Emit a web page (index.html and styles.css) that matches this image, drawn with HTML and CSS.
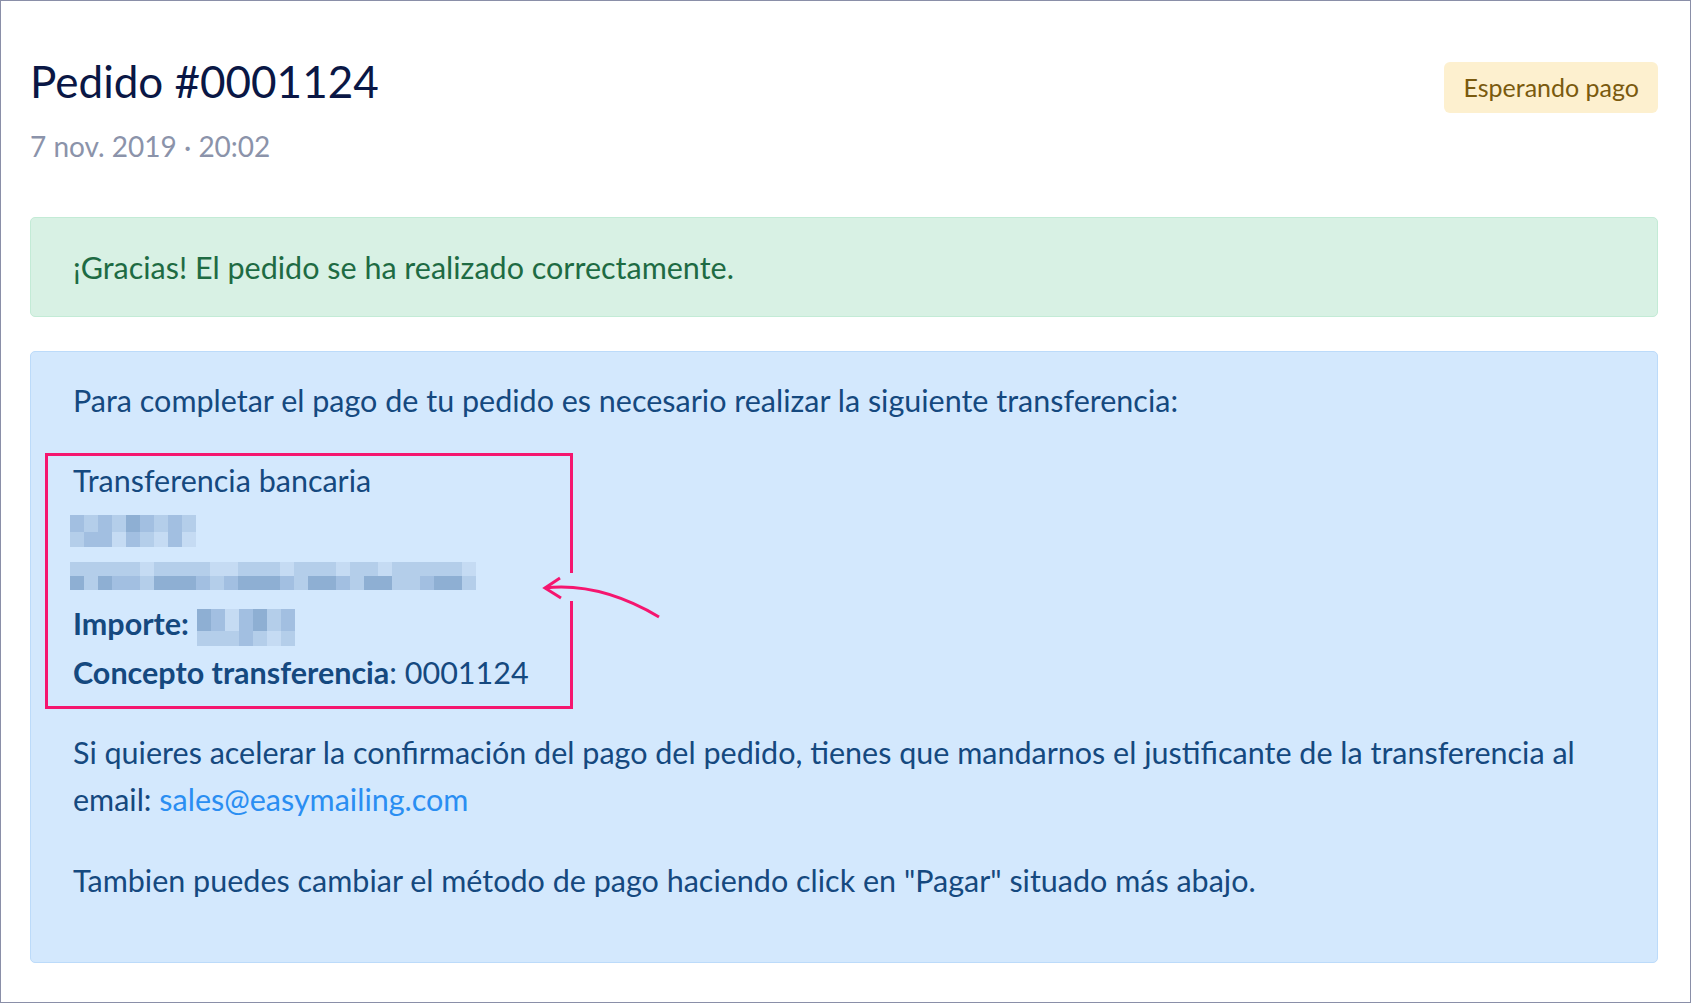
FILE: index.html
```html
<!DOCTYPE html>
<html>

<head>
    <link rel="stylesheet" href="styles.css">
</head>

<body>

    <div class="page">
        <div class="header">
            <div>
                <h1 class="title">Pedido #0001124</h1>
                <div class="date">7 nov. 2019 · 20:02</div>
            </div>
            <span class="badge">Esperando pago</span>
        </div>

        <div class="alert alert-success">¡Gracias! El pedido se ha realizado correctamente.</div>

        <div class="alert alert-info">
            <p>Para completar el pago de tu pedido es necesario realizar la siguiente transferencia:</p>

            <div class="bank">
                <div>Transferencia bancaria</div>
                <div class="mosaic-line">
                    <div class="mosaic mosaic-name">
                        <span class="m2"></span><span class="m3"></span><span class="m2"></span><span class="m3"></span><span class="m1"></span><span class="m2"></span><span class="m3"></span><span class="m2"></span><span class="m3"></span>
                        <span class="m3"></span><span class="m2"></span><span class="m2"></span><span class="m4"></span><span class="m2"></span><span class="m3"></span><span class="m4"></span><span class="m2"></span><span class="m4"></span>
                    </div>
                </div>
                <div class="mosaic-line">
                    <div class="mosaic mosaic-iban">
                        <span class="m3"></span><span class="m3"></span><span class="m3"></span><span class="m3"></span><span class="m3"></span><span class="m4"></span><span class="m3"></span><span class="m3"></span><span class="m3"></span><span class="m3"></span><span class="m4"></span><span class="m4"></span><span class="m3"></span><span class="m3"></span><span class="m3"></span><span class="m4"></span><span class="m3"></span><span class="m3"></span><span class="m3"></span><span class="m4"></span><span class="m3"></span><span class="m3"></span><span class="m4"></span><span class="m3"></span><span class="m3"></span><span class="m3"></span><span class="m3"></span><span class="m3"></span><span class="m4"></span>
                        <span class="m1"></span><span class="m3"></span><span class="m1"></span><span class="m2"></span><span class="m2"></span><span class="m3"></span><span class="m1"></span><span class="m1"></span><span class="m1"></span><span class="m2"></span><span class="m3"></span><span class="m2"></span><span class="m1"></span><span class="m1"></span><span class="m1"></span><span class="m2"></span><span class="m3"></span><span class="m1"></span><span class="m1"></span><span class="m2"></span><span class="m3"></span><span class="m1"></span><span class="m1"></span><span class="m3"></span><span class="m3"></span><span class="m2"></span><span class="m1"></span><span class="m1"></span><span class="m3"></span>
                    </div>
                </div>
                <div class="amount-line">
                    <strong>Importe:</strong>
                    <div class="mosaic mosaic-amount">
                        <span class="m1"></span><span class="m2"></span><span class="m4"></span><span class="m2"></span><span class="m1"></span><span class="m3"></span><span class="m2"></span>
                        <span class="m3"></span><span class="m3"></span><span class="m3"></span><span class="m2"></span><span class="m3"></span><span class="m4"></span><span class="m3"></span>
                    </div>
                </div>
                <div class="concept-line"><strong>Concepto transferencia</strong>: 0001124</div>

                <!-- annotation: red frame + arrow -->
                <div class="mark"></div>
                <svg class="arrow" width="125" height="55" viewBox="0 0 125 55">
                    <rect x="29" y="3" width="5" height="28" fill="#d3e8fd" />
                    <path d="M5 18 Q60 12 119 47" fill="none" stroke="#f5166f" stroke-width="3" />
                    <path d="M20 8 L5 18 L21 28" fill="none" stroke="#f5166f" stroke-width="3" />
                </svg>
            </div>

            <p>Si quieres acelerar la confirmación del pago del pedido, tienes que mandarnos el justificante de la transferencia al email: <a href="#">sales@easymailing.com</a></p>

            <p>Tambien puedes cambiar el método de pago haciendo click en "Pagar" situado más abajo.</p>
        </div>
    </div>

</body>

</html>
```

FILE: styles.css
```css
body {
    margin: 0;
    font-family: Lato, "Open Sans", sans-serif;
    background-color: #fff;
}

.page {
    box-sizing: border-box;
    height: 100vh;
    border: 1px solid #8a8fa8;
    padding: 54px 32px 0 29px;
}

.header {
    display: flex;
    justify-content: space-between;
    align-items: flex-start;
    margin-bottom: 47px;
}

.title {
    margin: 0 0 15px;
    font-size: 44px;
    font-weight: 400;
    line-height: 1.2;
    color: #0a1745;
}

.date {
    font-size: 28px;
    line-height: 47.5px;
    color: #8b93aa;
}

.badge {
    margin-top: 7px;
    padding: 0 19px;
    font-size: 25px;
    line-height: 51px;
    color: #7a5a0e;
    background-color: #fdf0cf;
    border-radius: 6px;
}

.alert {
    font-size: 30.5px;
    line-height: 47.5px;
    border: 1px solid;
    border-radius: 5px;
    padding: 26px 42px 24px;
}

.alert-success {
    margin-bottom: 34px;
    color: #1e6b43;
    background-color: #d8f1e4;
    border-color: #c3ebd6;
}

.alert-info {
    padding: 25px 42px 24px;
    color: #15497f;
    background-color: #d3e8fd;
    border-color: #bcdbfa;
}

.alert-info p {
    margin: 0 0 33px;
}

.alert-info p:last-child {
    margin-bottom: 34px;
}

.alert-info a {
    color: #2a8ef2;
    text-decoration: none;
}

.bank {
    position: relative;
    margin-bottom: 34px;
}

.bank strong {
    font-weight: 700;
}

.mosaic-line {
    height: 47.5px;
    display: flex;
    align-items: center;
    margin-left: -3px;
}

.amount-line {
    height: 47.5px;
    display: flex;
    align-items: center;
    gap: 8px;
}

.concept-line {
    position: relative;
    top: 2px;
}

.mosaic {
    display: grid;
    grid-auto-flow: row;
}

.mosaic-name {
    grid-template-columns: repeat(9, 14px);
    grid-template-rows: 17px 15px;
    margin-top: 5px;
}

.mosaic-iban {
    grid-template-columns: repeat(29, 14px);
    grid-template-rows: 14px 14px;
}

.mosaic-amount {
    grid-template-columns: repeat(7, 14px);
    grid-template-rows: 22px 15px;
    margin-top: 8px;
}

.m1 { background-color: #8eafd3; }
.m2 { background-color: #a2bfe1; }
.m3 { background-color: #b4ceea; }
.m4 { background-color: #c5dbf3; }

.mark {
    position: absolute;
    top: -4px;
    left: -28px;
    width: 528px;
    height: 256px;
    box-sizing: border-box;
    border: 3px solid #f5166f;
}

.arrow {
    position: absolute;
    left: 467px;
    top: 113px;
}
```
